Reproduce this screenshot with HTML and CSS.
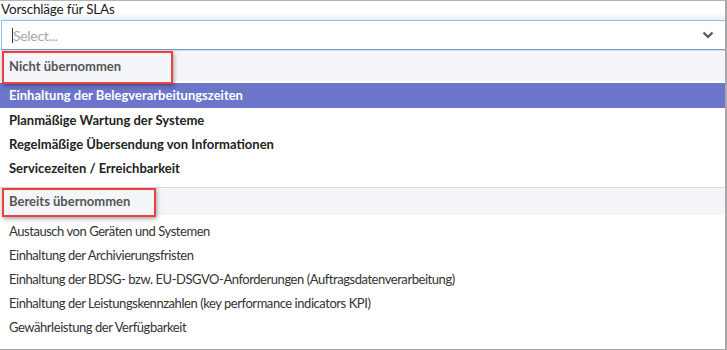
FILE: index.html
```html
<!DOCTYPE html>
<html lang="de">
<head>
    <meta charset="UTF-8">
    <title>Vorschläge für SLAs</title>
    <link rel="stylesheet" href="styles.css">
</head>
<body>
    <div class="frame">
        <div class="field-label">Vorschläge für SLAs</div>
        <div class="select-box">
            <span class="caret"></span>
            <span class="placeholder">Select...</span>
            <svg class="chevron" width="12" height="8" viewBox="0 0 12 8">
                <path d="M1.5 1.5 L6 6 L10.5 1.5" fill="none" stroke="#555" stroke-width="2.2"/>
            </svg>
        </div>
        <div class="menu">
            <div class="group-header first">Nicht übernommen</div>
            <div class="option strong active">Einhaltung der Belegverarbeitungszeiten</div>
            <div class="option strong">Planmäßige Wartung der Systeme</div>
            <div class="option strong">Regelmäßige Übersendung von Informationen</div>
            <div class="option strong">Servicezeiten / Erreichbarkeit</div>
            <div class="group-header second">Bereits übernommen</div>
            <div class="option">Austausch von Geräten und Systemen</div>
            <div class="option">Einhaltung der Archivierungsfristen</div>
            <div class="option">Einhaltung der BDSG- bzw. EU-DSGVO-Anforderungen (Auftragsdatenverarbeitung)</div>
            <div class="option">Einhaltung der Leistungskennzahlen (key performance indicators KPI)</div>
            <div class="option">Gewährleistung der Verfügbarkeit</div>

            <!-- Markierungen -->
            <div class="mark mark-1"></div>
            <div class="mark mark-2"></div>
        </div>
    </div>
</body>
</html>
```

FILE: styles.css
```css
body {
    margin: 0;
    font-family: 'Lato', 'Open Sans', sans-serif;
    background-color: #fff;
}

.frame {
    width: 725px;
    height: 348px;
    border-top: 1px solid #b4b4b4;
    border-right: 2px solid #a8a8a8;
    border-bottom: 2px solid #a8a8a8;
    display: flex;
    flex-direction: column;
    overflow: hidden;
}

.field-label {
    height: 19px;
    padding-left: 1px;
    font-size: 13.5px;
    line-height: 16px;
    letter-spacing: -0.2px;
    color: #1a1a1a;
    background: linear-gradient(#fff 60%, #e6f0fa);
}

.select-box {
    height: 28px;
    margin-left: 1px;
    border: 1px solid #8cc2ea;
    border-bottom-color: #6f9fc8;
    border-right: none;
    background-color: #fff;
    display: flex;
    align-items: center;
    padding-left: 10px;
    padding-right: 11px;
}

.caret {
    width: 1px;
    height: 15px;
    background-color: #333;
}

.placeholder {
    flex: 1;
    font-size: 14px;
    letter-spacing: -0.3px;
    color: #a6a6a6;
}

.menu {
    flex: 1;
    position: relative;
    border-top: 1px solid #dcdcdc;
}

.group-header {
    height: 30px;
    line-height: 30px;
    padding-left: 9px;
    font-size: 13px;
    font-weight: bold;
    color: #555;
    background-color: #f4f5f9;
}

.group-header.first {
    margin-bottom: 2px;
}

.group-header.second {
    height: 27px;
    line-height: 27px;
    margin-top: 7px;
    margin-bottom: 4px;
    border-top: 1px solid #d9d9d9;
}

.option {
    height: 24px;
    line-height: 24px;
    padding-left: 9px;
    font-size: 13px;
    letter-spacing: -0.45px;
    color: #333;
}

.option.strong {
    font-weight: bold;
    letter-spacing: 0;
    color: #222;
}

.option.active {
    height: 25px;
    background-color: #6b75c9;
    color: #fff;
}

.mark {
    position: absolute;
    border: 2px solid #ee4040;
    box-shadow: 1px 2px 4px rgba(0, 0, 0, 0.35);
}

.mark-1 {
    left: 2px;
    top: 0;
    width: 167px;
    height: 29px;
}

.mark-2 {
    left: 2px;
    top: 137px;
    width: 150px;
    height: 25px;
}
```
